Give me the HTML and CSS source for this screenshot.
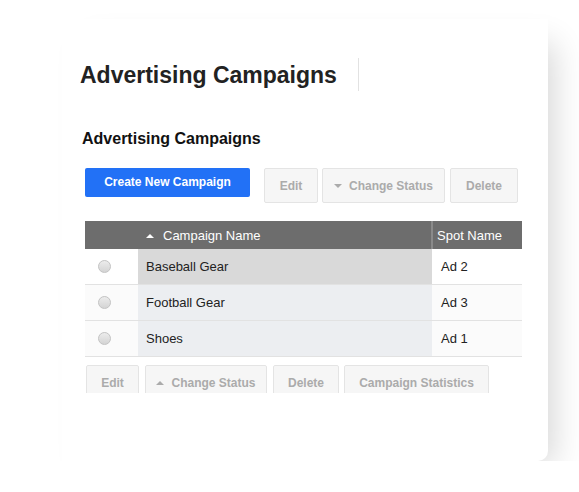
FILE: index.html
```html
<!DOCTYPE html>
<html>
<head>
<meta charset="utf-8">
<link rel="stylesheet" href="styles.css">
</head>
<body>
<div class="card">
  <div class="page-head">
    <h1 class="title">Advertising Campaigns</h1>
    <div class="divider"></div>
  </div>
  <h2 class="subtitle">Advertising Campaigns</h2>
  <div class="toolbar">
    <button class="btn-primary">Create New Campaign</button>
    <div class="btn-group top">
      <span class="btn w-edit">Edit</span>
      <span class="btn w-status"><span class="tri down"></span>Change Status</span>
      <span class="btn w-delete">Delete</span>
    </div>
  </div>
  <table class="grid">
    <colgroup>
      <col class="col-radio">
      <col class="col-name">
      <col class="col-spot">
    </colgroup>
    <thead>
      <tr>
        <th class="c-radio"></th>
        <th class="c-name"><span class="tri up white"></span>Campaign Name</th>
        <th class="c-spot">Spot Name</th>
      </tr>
    </thead>
    <tbody>
      <tr class="active">
        <td class="c-radio"><span class="radio"></span></td>
        <td class="c-name">Baseball Gear</td>
        <td class="c-spot">Ad 2</td>
      </tr>
      <tr>
        <td class="c-radio"><span class="radio"></span></td>
        <td class="c-name">Football Gear</td>
        <td class="c-spot">Ad 3</td>
      </tr>
      <tr>
        <td class="c-radio"><span class="radio"></span></td>
        <td class="c-name">Shoes</td>
        <td class="c-spot">Ad 1</td>
      </tr>
    </tbody>
  </table>
  <div class="bottom-bar">
    <span class="btn b-edit">Edit</span>
    <span class="btn b-status"><span class="tri up gray"></span>Change Status</span>
    <span class="btn b-delete">Delete</span>
    <span class="btn b-stats">Campaign Statistics</span>
  </div>
</div>
</body>
</html>
```

FILE: styles.css
```css
html, body {
  margin: 0;
  padding: 0;
  background: #ffffff;
  font-family: "Liberation Sans", Arial, sans-serif;
  overflow: hidden;
}

.card {
  margin: 19px 0 0 62px;
  width: 486px;
  height: 442px;
  box-sizing: border-box;
  padding: 39px 0 0 18px;
  background: #ffffff;
  border-radius: 0 0 10px 0;
  box-shadow: 16px 14px 30px -10px rgba(0, 0, 0, 0.16);
}

.page-head {
  display: flex;
  align-items: center;
  height: 33px;
}

.title {
  margin: 0;
  font-size: 23px;
  font-weight: bold;
  color: #222222;
  line-height: 26px;
}

.divider {
  width: 1px;
  height: 33px;
  background: #e2e2e2;
  margin-left: 21px;
}

.subtitle {
  margin: 39px 0 0 2px;
  font-size: 16px;
  font-weight: bold;
  line-height: 18px;
  color: #111111;
}

.toolbar {
  display: flex;
  align-items: flex-start;
  margin: 20px 0 0 5px;
}

.btn-primary {
  width: 165px;
  height: 29px;
  border: none;
  border-radius: 2px;
  background: #2271f6;
  color: #ffffff;
  font-family: "Liberation Sans", Arial, sans-serif;
  font-size: 12px;
  font-weight: bold;
  padding: 0 0 1px 0;
}

.btn-group {
  display: flex;
  margin-left: 14px;
}

.btn {
  display: flex;
  align-items: center;
  justify-content: center;
  box-sizing: border-box;
  height: 35px;
  background: #f6f6f6;
  border: 1px solid #e4e4e4;
  border-radius: 2px;
  color: #ababab;
  font-size: 12px;
  font-weight: bold;
}

.w-edit { width: 54px; }
.w-status { width: 123px; margin-left: 4px; }
.w-delete { width: 68px; margin-left: 5px; }

.tri {
  display: inline-block;
  width: 0;
  height: 0;
  border-left: 4px solid transparent;
  border-right: 4px solid transparent;
  margin-right: 7px;
}
.tri.down { border-top: 4px solid #ababab; }
.tri.up { border-bottom: 4px solid #ababab; }
.tri.up.white { border-bottom-color: #ffffff; margin-right: 9px; vertical-align: 2px; }

.grid {
  margin: 18px 0 0 5px;
  width: 437px;
  border-collapse: collapse;
  font-size: 13px;
  table-layout: fixed;
}

.col-radio { width: 53px; }
.col-name { width: 294px; }
.col-spot { width: 90px; }

.grid th {
  background: #6d6d6d;
  color: #ffffff;
  font-weight: normal;
  height: 28px;
  padding: 0;
  text-align: left;
  white-space: nowrap;
}

.grid th.c-name { padding-left: 8px; }
.grid th.c-spot {
  padding-left: 4px;
  border-left: 2px solid #8a8a8a;
}

.grid td {
  height: 35px;
  padding: 0;
  border-bottom: 1px solid #e2e2e2;
  color: #222222;
  background: #fbfbfb;
}

.grid td.c-name {
  padding-left: 8px;
  background: #eceef1;
}

.grid td.c-spot { padding-left: 9px; }

.grid tr.active td { background: #ffffff; }
.grid tr.active td.c-name { background: #d9d9d9; }

.radio {
  display: block;
  width: 11px;
  height: 11px;
  margin-left: 13px;
  border-radius: 50%;
  border: 1px solid #c4c4c4;
  background: linear-gradient(#ececec, #d4d4d4);
}

.bottom-bar {
  display: flex;
  height: 28px;
  overflow: hidden;
  margin: 8px 0 0 6px;
  align-items: flex-start;
}

.b-edit { width: 53px; }
.b-status { width: 122px; margin-left: 6px; }
.b-delete { width: 66px; margin-left: 6px; }
.b-stats { width: 145px; margin-left: 5px; }
```
